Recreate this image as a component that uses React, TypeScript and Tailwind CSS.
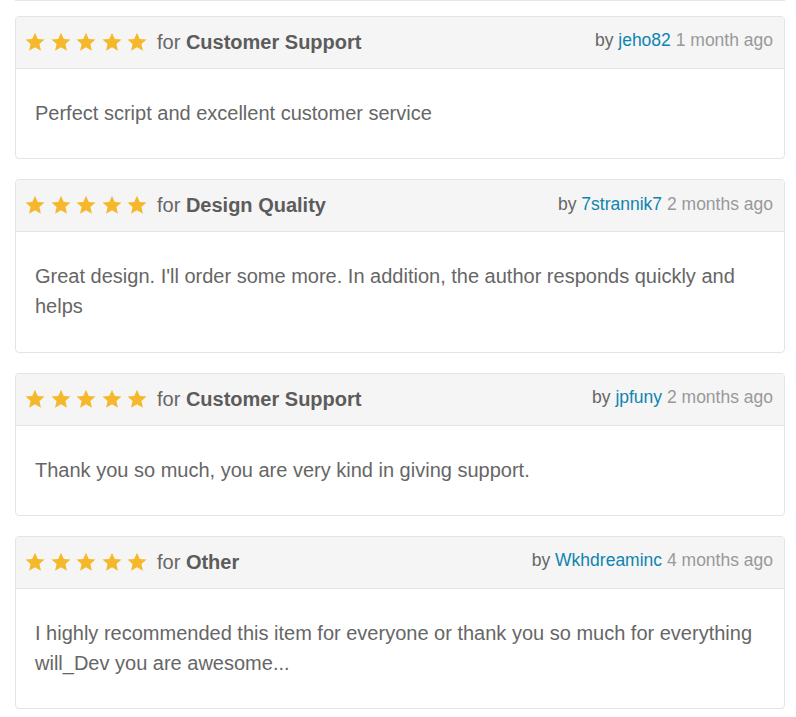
const reviews = [
  {
    topic: 'Customer Support',
    user: 'jeho82',
    when: '1 month ago',
    text: 'Perfect script and excellent customer service',
  },
  {
    topic: 'Design Quality',
    user: '7strannik7',
    when: '2 months ago',
    text: "Great design. I'll order some more. In addition, the author responds quickly and helps",
  },
  {
    topic: 'Customer Support',
    user: 'jpfuny',
    when: '2 months ago',
    text: 'Thank you so much, you are very kind in giving support.',
  },
  {
    topic: 'Other',
    user: 'Wkhdreaminc',
    when: '4 months ago',
    text: 'I highly recommended this item for everyone or thank you so much for everything will_Dev you are awesome...',
  },
];

function Star() {
  return (
    <svg viewBox="0 0 24 24" className="w-[22px] h-[22px] shrink-0" fill="#f6b82b">
      <path d="M12 1.8l3 6.9 7.4.6-5.6 4.9 1.7 7.3L12 17.6l-6.5 3.9 1.7-7.3L1.6 9.3 9 8.7z" />
    </svg>
  );
}

function App() {
  return (
    <div className="min-h-screen bg-white font-['Liberation_Sans',Arial,sans-serif] text-[#666]">
      <div className="ml-[15px] w-[770px] h-px bg-[#e5e8ea]" />
      <div className="ml-[15px] w-[770px] pt-[15px] flex flex-col gap-[20px]">
        {reviews.map((r, i) => (
          <div key={i} className="border border-[#e1e5e8] rounded-[4px] overflow-hidden">
            {/* header */}
            <div className="h-[52px] bg-[#f5f5f5] border-b border-[#e1e5e8] flex items-center justify-between pl-[8px] pr-[11px]">
              <div className="flex items-center">
                <div className="flex items-center gap-[3.5px] -mt-[1px]">
                  <Star />
                  <Star />
                  <Star />
                  <Star />
                  <Star />
                </div>
                <span className="ml-[9px] text-[20px] -mt-[1px]">
                  for <b className="font-bold text-[#5c5c5c]">{r.topic}</b>
                </span>
              </div>
              <div className="text-[17.5px] -mt-[4px]">
                by <a className="text-[#0f84b0]">{r.user}</a> <span className="text-[#999]">{r.when}</span>
              </div>
            </div>
            {/* body */}
            <div className="px-[19px] pt-[29px] pb-[30px] text-[20px] leading-[30.2px]">{r.text}</div>
          </div>
        ))}
      </div>
    </div>
  );
}

export default App;
